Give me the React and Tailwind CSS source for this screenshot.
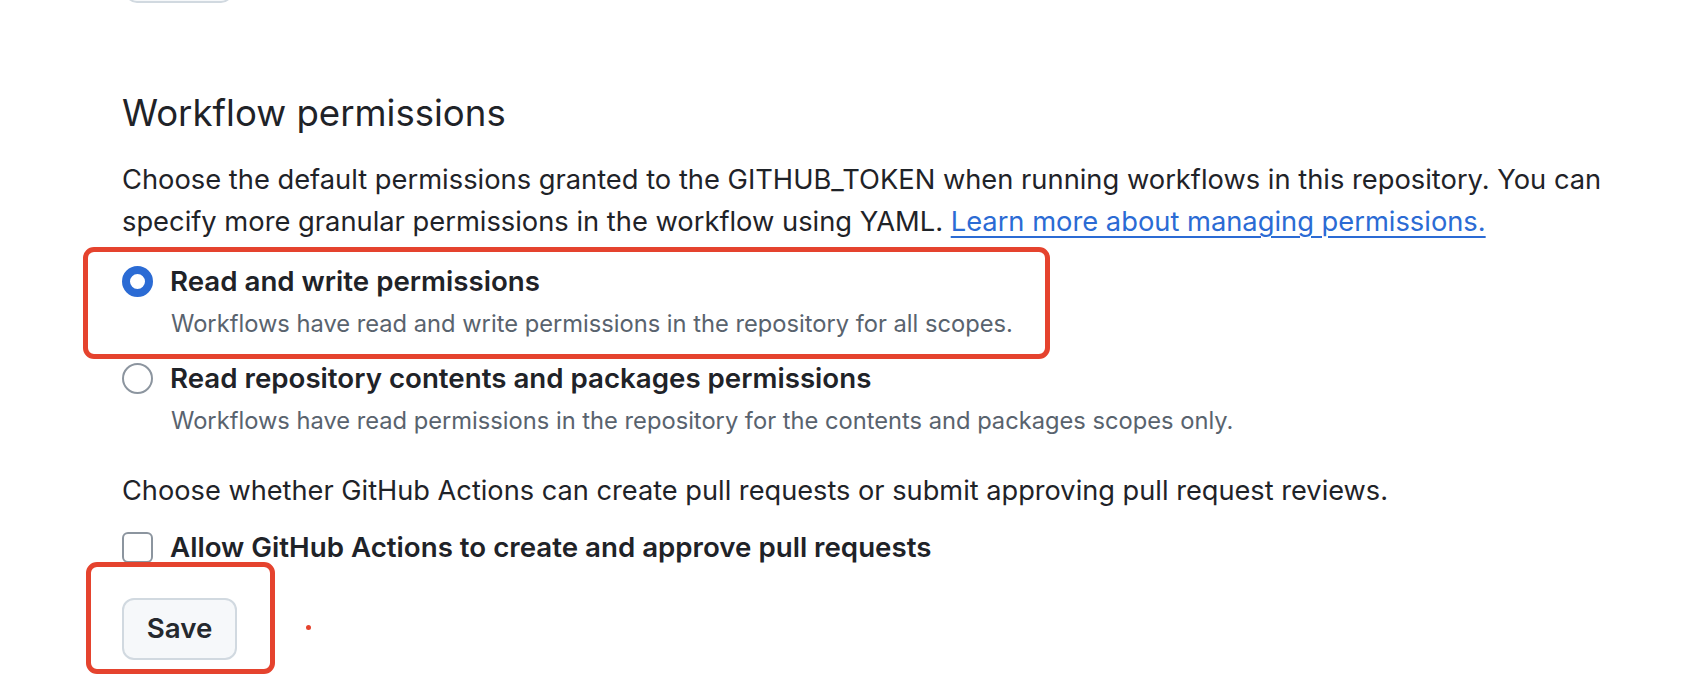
import React from "react";

const FONT = '"Inter", "Noto Sans", sans-serif';

function Radio({ checked }) {
  return checked ? (
    <span className="box-border block h-[31px] w-[31px] shrink-0 rounded-full border-[8px] border-[#2b6bd4] bg-white" />
  ) : (
    <span className="box-border block h-[31px] w-[31px] shrink-0 rounded-full border-2 border-[#8c959f] bg-white" />
  );
}

function Option({ checked, title, desc, className }) {
  return (
    <div className={"flex flex-col " + className}>
      <div className="flex h-[36px] items-center gap-[17px]">
        <Radio checked={checked} />
        <span className="text-[27.7px] leading-[36px] font-semibold">{title}</span>
      </div>
      <div className="mt-[8px] pl-[49px] text-[23.7px] leading-[34px] text-[#59636e]">{desc}</div>
    </div>
  );
}

export default function App() {
  return (
    <div className="relative h-[694px] w-[1698px] overflow-hidden bg-white text-[#1f2328]" style={{ fontFamily: FONT }}>
      <div className="flex flex-col items-start pl-[122px]">
        <div className="-mt-[59px] ml-[3px] box-border h-[62px] w-[108px] rounded-[12px] border-2 border-[#d1d9e0] bg-[#f6f8fa]" />
        <h2 className="mt-[86px] text-[36.6px] leading-[48px] font-normal">Workflow permissions</h2>
        <p className="mt-[22px] text-[27.3px] leading-[42px]">
          Choose the default permissions granted to the GITHUB_TOKEN when running workflows in this repository. You can
          <br />
          specify more granular permissions in the workflow using YAML.{" "}
          <a className="text-[#2b6bd4] underline decoration-[2px] underline-offset-[5px]" href="#">
            Learn more about managing permissions.
          </a>
        </p>

        <Option
          checked
          className="mt-[20px]"
          title="Read and write permissions"
          desc="Workflows have read and write permissions in the repository for all scopes."
        />
        <Option
          className="mt-[19px]"
          title="Read repository contents and packages permissions"
          desc="Workflows have read permissions in the repository for the contents and packages scopes only."
        />

        <p className="mt-[32px] text-[27.2px] leading-[41px]">
          Choose whether GitHub Actions can create pull requests or submit approving pull request reviews.
        </p>

        <label className="mt-[18px] flex h-[36px] items-center gap-[17px]">
          <span className="box-border block h-[31px] w-[31px] shrink-0 rounded-[6px] border-2 border-[#8c959f] bg-white" />
          <span className="text-[27.7px] leading-[36px] font-semibold">Allow GitHub Actions to create and approve pull requests</span>
        </label>

        <button className="mt-[33px] box-border h-[62px] w-[115px] rounded-[12px] border-2 border-[#d1d9e0] bg-[#f6f8fa] text-[27.7px] font-semibold text-[#25292e]">
          Save
        </button>
      </div>

      <div className="pointer-events-none absolute left-[83px] top-[247px] h-[112px] w-[967px] rounded-[11px] border-[5px] border-[#e5432e]" />
      <div className="pointer-events-none absolute left-[86px] top-[562px] h-[112px] w-[189px] rounded-[11px] border-[5px] border-[#e5432e]" />
      <div className="absolute left-[306px] top-[625px] h-[5px] w-[5px] rounded-full bg-[#e5432e]" />
    </div>
  );
}
